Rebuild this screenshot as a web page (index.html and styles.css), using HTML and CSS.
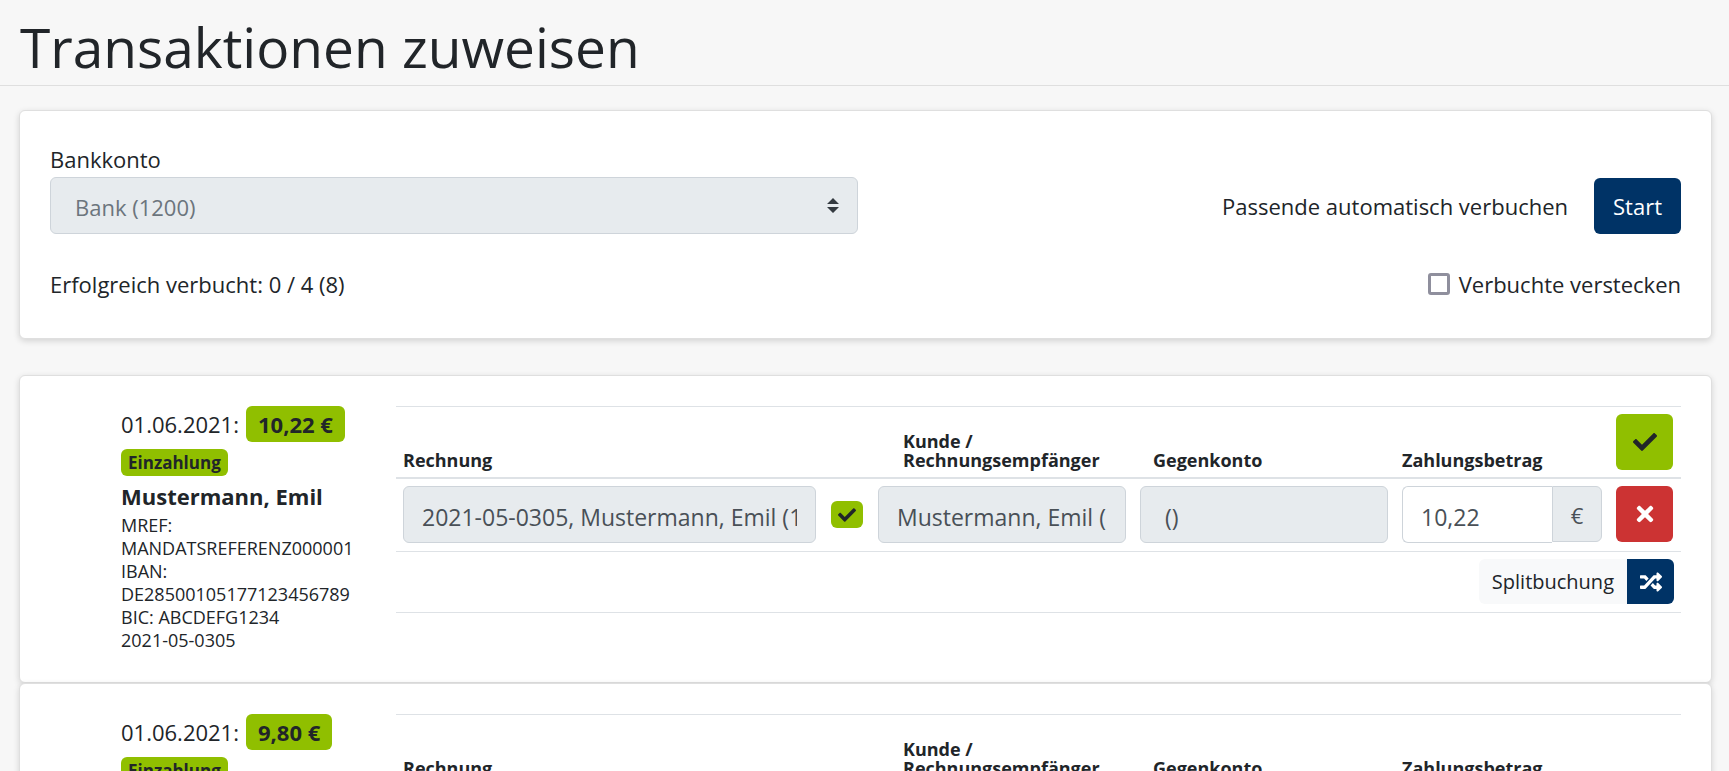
FILE: index.html
```html
<!DOCTYPE html>
<html lang="de">
<head>
<meta charset="utf-8">
<meta name="viewport" content="width=device-width, initial-scale=1">
<title>Transaktionen zuweisen</title>
<link rel="stylesheet" href="styles.css">
</head>
<body>
<svg class="sprite" aria-hidden="true">
  <symbol id="check" viewBox="0 0 512 512"><path d="M173.898 439.404l-166.4-166.4c-9.997-9.997-9.997-26.206 0-36.204l36.203-36.204c9.997-9.998 26.207-9.998 36.204 0L192 312.69 432.095 72.596c9.997-9.997 26.207-9.997 36.204 0l36.203 36.204c9.997 9.997 9.997 26.206 0 36.204l-294.4 294.401c-9.998 9.997-26.207 9.997-36.204-.001z"/></symbol>
  <symbol id="times" viewBox="0 0 352 512"><path d="M242.72 256l100.07-100.07c12.28-12.28 12.28-32.19 0-44.48l-22.24-22.24c-12.28-12.28-32.19-12.28-44.48 0L176 189.28 75.93 89.21c-12.28-12.28-32.19-12.28-44.48 0L9.21 111.45c-12.28 12.28-12.28 32.19 0 44.48L109.28 256 9.21 356.07c-12.28 12.28-12.28 32.19 0 44.48l22.24 22.24c12.28 12.28 32.2 12.28 44.48 0L176 322.72l100.07 100.07c12.28 12.28 32.2 12.28 44.48 0l22.24-22.24c12.28-12.28 12.28-32.19 0-44.48L242.72 256z"/></symbol>
  <symbol id="random" viewBox="0 0 512 512"><path d="M504.971 359.029c9.373 9.373 9.373 24.569 0 33.941l-80 79.984c-15.01 15.01-40.971 4.49-40.971-16.971V416h-58.785a12.004 12.004 0 0 1-8.773-3.812l-70.556-75.596 53.333-57.143L352 336h32v-39.981c0-21.438 25.943-31.998 40.971-16.971l80 79.981zM12 176h84l52.781 56.551 53.333-57.143-70.556-75.596A11.999 11.999 0 0 0 122.785 96H12c-6.627 0-12 5.373-12 12v56c0 6.627 5.373 12 12 12zm372 0v39.984c0 21.46 25.961 31.98 40.971 16.971l80-79.984c9.373-9.373 9.373-24.569 0-33.941l-80-79.981C409.943 24.021 384 34.582 384 56.019V96h-58.785a12.004 12.004 0 0 0-8.773 3.812L96 336H12c-6.627 0-12 5.373-12 12v56c0 6.627 5.373 12 12 12h110.785c3.326 0 6.503-1.381 8.773-3.812L352 176h32z"/></symbol>
</svg>
<header class="page-header"><h1>Transaktionen zuweisen</h1></header>
<main class="content">
  <section class="card overview">
    <div class="row row-end">
      <div class="account">
        <label for="bank">Bankkonto</label>
        <div class="select-wrap">
          <select id="bank" class="control select" disabled><option>Bank (1200)</option></select>
          <svg class="caret" viewBox="0 0 4 5" aria-hidden="true"><path d="M2 0L0 2h4zm0 5L0 3h4z"/></svg>
        </div>
      </div>
      <div class="auto">
        <span>Passende automatisch verbuchen</span>
        <button type="button" class="btn navy">Start</button>
      </div>
    </div>
    <div class="row">
      <span>Erfolgreich verbucht: 0 / 4 (8)</span>
      <label class="hide-done"><input type="checkbox" class="box">Verbuchte verstecken</label>
    </div>
  </section>

  <section class="card transaction">
    <div class="details">
      <div class="date">01.06.2021: <span class="badge amount">10,22 €</span></div>
      <div class="kind"><span class="badge tag">Einzahlung</span></div>
      <div class="name">Mustermann, Emil</div>
      <div class="purpose">MREF: MANDATSREFERENZ000001<br>IBAN: DE28500105177123456789<br>BIC: ABCDEFG1234<br>2021-05-0305</div>
    </div>
    <table class="booking">
      <colgroup><col><col class="c-state"><col class="c-party"><col class="c-party"><col class="c-amount"><col class="c-action"></colgroup>
      <thead>
        <tr>
          <th colspan="2">Rechnung</th>
          <th class="th-customer">Kunde /<br>Rechnungsempfänger</th>
          <th class="th-contra">Gegenkonto</th>
          <th>Zahlungsbetrag</th>
          <th><button type="button" class="btn icon-btn green" aria-label="Verbuchen"><svg class="icon"><use href="#check"/></svg></button></th>
        </tr>
      </thead>
      <tbody>
        <tr>
          <td><input class="control" aria-label="Rechnung" value="2021-05-0305, Mustermann, Emil (10001)" disabled></td>
          <td class="state"><span class="badge mini"><svg class="icon icon-small"><use href="#check"/></svg></span></td>
          <td><input class="control" aria-label="Kunde / Rechnungsempfänger" value="Mustermann, Emil (10001)" disabled></td>
          <td><input class="control" aria-label="Gegenkonto" value=" ()" disabled></td>
          <td><div class="group"><input class="control" aria-label="Zahlungsbetrag" value="10,22"><span class="addon">€</span></div></td>
          <td><button type="button" class="btn icon-btn red" aria-label="Entfernen"><svg class="icon"><use href="#times"/></svg></button></td>
        </tr>
        <tr>
          <td colspan="6"><div class="split"><span class="split-label" id="split-1">Splitbuchung</span><button type="button" class="split-btn" aria-labelledby="split-1"><svg class="icon icon-medium"><use href="#random"/></svg></button></div></td>
        </tr>
      </tbody>
    </table>
  </section>

  <section class="card transaction">
    <div class="details">
      <div class="date">01.06.2021: <span class="badge amount">9,80 €</span></div>
      <div class="kind"><span class="badge tag">Einzahlung</span></div>
    </div>
    <table class="booking">
      <colgroup><col><col class="c-state"><col class="c-party"><col class="c-party"><col class="c-amount"><col class="c-action"></colgroup>
      <thead>
        <tr>
          <th colspan="2">Rechnung</th>
          <th class="th-customer">Kunde /<br>Rechnungsempfänger</th>
          <th class="th-contra">Gegenkonto</th>
          <th>Zahlungsbetrag</th>
          <th></th>
        </tr>
      </thead>
    </table>
  </section>
</main>
</body>
</html>
```

FILE: styles.css
```css
*, *::before, *::after { box-sizing: border-box; }

html { height: 100%; overflow: hidden; }

body {
  margin: 0;
  background: #f7f7f7;
  color: #212529;
  font-family: "Open Sans", "Noto Sans", sans-serif;
  font-size: 22px;
  line-height: 36px;
}

input, select, button { font: inherit; color: inherit; margin: 0; }

.sprite { display: none; }

.page-header { padding: 10px 20px 2px; border-bottom: 1px solid #dfdfdf; }
.page-header h1 { margin: 0; font-size: 55px; font-weight: 400; line-height: 73px; }

.content { padding: 24px 17px 0 19px; }

.card {
  padding: 30px;
  background: #fff;
  border: 1px solid #dfdfdf;
  border-radius: 6px;
  box-shadow: 0 2px 6px rgba(0, 0, 0, .15);
}

.overview { margin-bottom: 36px; padding-bottom: 36px; }
.row { display: flex; justify-content: space-between; align-items: center; }
.row-end { align-items: flex-end; margin-bottom: 32px; }
.account { width: 50%; max-width: 808px; }
.account label { display: block; }
.select-wrap { position: relative; }
.auto { display: flex; align-items: center; gap: 26px; }
.hide-done { display: flex; align-items: center; gap: 9px; }

.control {
  display: block;
  width: 100%;
  height: 57px;
  padding: 4px 18px 0;
  border: 1px solid #ced4da;
  border-radius: 6px;
  background: #fff;
  color: #495057;
  font-size: 23px;
}
.control:disabled { background: #e7ebee; opacity: 1; }
.select { appearance: none; padding: 2px 24px 0; font-size: 22px; }
.select:disabled { color: #6c757d; }
.caret { position: absolute; right: 19px; top: 21px; width: 12px; height: 15px; fill: #343a40; }

.box {
  appearance: none;
  width: 22px;
  height: 22px;
  border: 3px solid #8f8f9d;
  border-radius: 3px;
  background: #fff;
}

.btn {
  height: 56px;
  padding: 0 19px;
  border: 0;
  border-radius: 6px;
}
.navy { background: #036; color: #fff; }
.green { background: #90bf00; color: #212529; }
.red { background: #c33; color: #fff; }
.icon-btn { display: flex; align-items: center; justify-content: center; width: 57px; padding: 0; }
.icon { width: 24px; height: 24px; fill: currentColor; }
.icon-small { width: 18px; height: 18px; }
.icon-medium { width: 22px; height: 22px; }

.transaction { display: grid; grid-template-columns: 275px 1fr; padding-left: 101px; }
.transaction + .transaction { min-height: 308px; }

.badge { display: inline-block; background: #90bf00; border-radius: 6px; font-weight: 700; }
.details { padding-right: 15px; }
.date { display: flex; align-items: center; gap: 7px; }
.amount { padding: 0 12px; }
.kind { display: flex; padding-top: 7px; }
.tag { padding: 0 7px; font-size: 17px; line-height: 27px; }
.name { margin-top: 2px; font-weight: 700; }
.purpose { font-size: 18px; line-height: 23px; }

.booking {
  width: 100%;
  table-layout: fixed;
  border-collapse: separate;
  border-spacing: 0;
  align-self: start;
  border-bottom: 1px solid #dee2e6;
}
.c-state { width: 48px; }
.c-party { width: 262px; }
.c-amount { width: 214px; }
.c-action { width: 72px; }

.booking th, .booking td { padding: 7px; border-top: 1px solid #dee2e6; }
.booking th {
  height: 73px;
  border-bottom: 2px solid #dee2e6;
  text-align: left;
  vertical-align: bottom;
  font-size: 18px;
  line-height: 19px;
}
.booking tbody tr:first-child td { border-top: 0; padding-bottom: 8px; vertical-align: top; }
.booking tbody tr:last-child td { padding-bottom: 8px; }
.booking .th-customer { padding-left: 32px; }
.booking .th-contra { padding-left: 20px; }
.booking tbody .state { padding: 22px 8px 0; }
.mini { display: flex; align-items: center; justify-content: center; height: 27px; }

.group { display: flex; align-items: flex-start; }
.group .control { flex: 1; min-width: 0; border-radius: 6px 0 0 6px; border-right: 0; }
.addon {
  width: 50px;
  height: 56px;
  border: 1px solid #ced4da;
  border-radius: 0 6px 6px 0;
  background: #e7ebee;
  color: #495057;
  line-height: 56px;
  text-align: center;
}

.split { display: flex; justify-content: flex-end; font-size: 20px; line-height: 45px; }
.split-label { padding: 0 13px; background: #f8f9fa; border-radius: 6px 0 0 6px; }
.split-btn {
  display: flex;
  align-items: center;
  justify-content: center;
  width: 47px;
  height: 45px;
  padding: 0;
  border: 0;
  border-radius: 0 6px 6px 0;
  background: #036;
  color: #fff;
}
```
